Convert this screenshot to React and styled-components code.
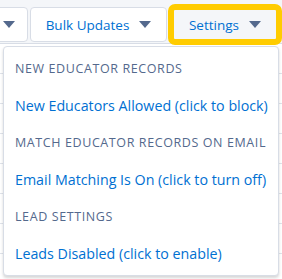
import React from "react";
import styled, { createGlobalStyle } from "styled-components";

const Global = createGlobalStyle`
  html, body { margin: 0; padding: 0; }
  body {
    background: #f4f6f9;
    font-family: "Open Sans", "Noto Sans", Arial, sans-serif;
    width: 282px;
    height: 279px;
    overflow: hidden;
  }
`;

const Page = styled.div`
  position: relative;
  width: 282px;
  height: 279px;
  overflow: hidden;
`;

const Toolbar = styled.div`
  display: flex;
  gap: 2px;
  padding-top: 7px;
  height: 35px;
`;

const Button = styled.button`
  display: flex;
  align-items: center;
  justify-content: ${(p) => (p.$end ? "flex-end" : "center")};
  gap: 10px;
  box-sizing: border-box;
  height: 35px;
  width: ${(p) => p.$w}px;
  margin-left: ${(p) => p.$ml || 0}px;
  padding: 0 12px;
  border: 1px solid #d8dde6;
  border-radius: 4px;
  background: ${(p) => (p.$active ? "#f4f6f9" : "#ffffff")};
  color: #0070d2;
  font-family: inherit;
  font-size: 13.5px;
  white-space: nowrap;
  outline: ${(p) => (p.$highlight ? "6px solid #ffcc00" : "none")};
  outline-offset: -3px;
`;

const Caret = styled.span`
  display: inline-block;
  width: 0;
  height: 0;
  border-left: 6px solid transparent;
  border-right: 6px solid transparent;
  border-top: 7px solid #54698d;
`;

const Table = styled.div`
  border-top: 1px solid #d8dde6;
  margin-top: 1px;
  background: #ffffff;
  height: 240px;
  display: flex;
  flex-direction: column;
`;

const TableRow = styled.div`
  height: 31px;
  border-bottom: 1px solid #dfe3ea;
`;

const Menu = styled.div`
  position: absolute;
  top: 46px;
  left: 3px;
  width: 276px;
  box-sizing: border-box;
  background: #ffffff;
  border: 1px solid #d8dde6;
  border-radius: 4px;
  box-shadow: 0 2px 3px rgba(0, 0, 0, 0.16);
  padding: 3px 0;
  display: flex;
  flex-direction: column;
`;

const MenuHeader = styled.div`
  height: 37px;
  display: flex;
  align-items: center;
  padding-left: 11px;
  color: #54698d;
  font-size: 12.5px;
  letter-spacing: 0.6px;
  text-transform: uppercase;
  white-space: nowrap;
`;

const MenuItem = styled.a`
  height: 37px;
  display: flex;
  align-items: center;
  padding-left: 11px;
  color: #0070d2;
  font-size: 14.25px;
  text-decoration: none;
  white-space: nowrap;
`;

export default function App() {
  return (
    <Page>
      <Global />
      <Toolbar>
        <Button $w={100} $ml={-72} $end aria-label="Actions">
          <Caret />
        </Button>
        <Button $w={137}>
          <span>Bulk Updates</span>
          <Caret />
        </Button>
        <Button $w={108} $ml={2} $active $highlight>
          <span>Settings</span>
          <Caret />
        </Button>
      </Toolbar>
      <Table>
        {Array.from({ length: 8 }).map((_, i) => (
          <TableRow key={i} />
        ))}
      </Table>
      <Menu>
        <MenuHeader>New Educator Records</MenuHeader>
        <MenuItem href="#">New Educators Allowed (click to block)</MenuItem>
        <MenuHeader>Match Educator Records on Email</MenuHeader>
        <MenuItem href="#">Email Matching Is On (click to turn off)</MenuItem>
        <MenuHeader>Lead Settings</MenuHeader>
        <MenuItem href="#">Leads Disabled (click to enable)</MenuItem>
      </Menu>
    </Page>
  );
}
